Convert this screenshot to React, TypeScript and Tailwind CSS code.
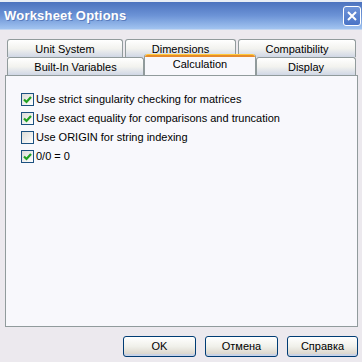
import { useState } from "react";

type Opt = { label: string; checked: boolean };

const initialOptions: Opt[] = [
  { label: "Use strict singularity checking for matrices", checked: true },
  { label: "Use exact equality for comparisons and truncation", checked: true },
  { label: "Use ORIGIN for string indexing", checked: false },
  { label: "0/0 = 0", checked: true },
];

function Tab({
  label,
  width,
  selected,
}: {
  label: string;
  width: string;
  selected?: boolean;
}) {
  if (selected) {
    return (
      <div
        className={`${width} relative z-10 -mt-[3px] h-[21px] -mb-[1px] flex flex-col rounded-t-[3px] border-x border-[#919B9C] bg-[#F8F8FC]`}
      >
        <div className="h-[3px] rounded-t-[3px] bg-[#E68B2C] border-t border-[#FFC83C]" />
        <div className="flex-1 text-center leading-[15px] text-black">
          {label}
        </div>
      </div>
    );
  }
  return (
    <div
      className={`${width} h-[18px] rounded-t-[3px] border border-b-0 border-[#919B9C] bg-gradient-to-b from-[#FFFFFF] via-[#F3F3EF] to-[#D0D7E5] text-center leading-[19px] text-black`}
    >
      {label}
    </div>
  );
}

function Check({ checked, onClick }: { checked: boolean; onClick: () => void }) {
  return (
    <div
      onClick={onClick}
      className="w-[13px] h-[13px] border border-[#1C5180] bg-gradient-to-br from-[#DCDCD7] to-[#FFFFFF] flex items-center justify-center"
    >
      {checked && (
        <svg width="9" height="8" viewBox="0 0 9 8">
          <path
            d="M1 3.5 L3.5 6 L8 1"
            stroke="#21A121"
            strokeWidth="2.2"
            fill="none"
          />
        </svg>
      )}
    </div>
  );
}

function Btn({ label, width }: { label: string; width: string }) {
  return (
    <button
      className={`${width} h-[21px] rounded-[3px] border border-[#003C74] bg-gradient-to-b from-[#FFFFFF] via-[#F0F0EA] to-[#D6D0C5] text-[11px] text-black shadow-[inset_0_-2px_0_#C9D3E6]`}
    >
      {label}
    </button>
  );
}

export default function App() {
  const [options, setOptions] = useState(initialOptions);

  const toggle = (i: number) =>
    setOptions((prev) =>
      prev.map((o, j) => (j === i ? { ...o, checked: !o.checked } : o))
    );

  return (
    <div
      className="w-[362px] h-[362px] overflow-hidden bg-[#ECE9EE] flex flex-col text-[11px]"
      style={{ fontFamily: "Tahoma, 'Liberation Sans', sans-serif" }}
    >
      {/* title bar */}
      <div className="h-[2px] bg-[#E9EDF5]" />
      <div className="h-[28px] flex items-center justify-between pl-[4px] pr-[1px] bg-gradient-to-b from-[#4C72BE] via-[#6C93D6] to-[#A2C4F0] border-b border-[#C4D6F0]">
        <span className="text-white font-bold text-[13px] tracking-[0.2px] [text-shadow:1px_1px_0_#5A7CBC]">
          Worksheet Options
        </span>
        <div className="w-[18px] h-[20px] rounded-[3px] border border-white bg-gradient-to-b from-[#6E93D8] to-[#4A74C6] flex items-center justify-center">
          <svg width="10" height="10" viewBox="0 0 10 10">
            <path d="M1 1 L9 9 M9 1 L1 9" stroke="white" strokeWidth="2" />
          </svg>
        </div>
      </div>

      {/* tabs */}
      <div className="mt-[9px] pl-[7px] flex flex-col">
        <div className="flex gap-[2px]">
          <Tab label="Unit System" width="w-[116px]" />
          <Tab label="Dimensions" width="w-[111px]" />
          <Tab label="Compatibility" width="w-[118px]" />
        </div>
        <div className="flex">
          <Tab label="Built-In Variables" width="w-[137px]" />
          <Tab label="Calculation" width="w-[112px]" selected />
          <Tab label="Display" width="w-[100px]" />
        </div>
      </div>

      {/* panel */}
      <div className="ml-[5px] w-[353px] h-[252px] border border-[#919B9C] bg-[#F8F8FC] pt-[17px] pl-[15px] flex flex-col gap-[6px]">
        {options.map((o, i) => (
          <div key={o.label} className="flex items-center gap-[2px] h-[13px]">
            <Check checked={o.checked} onClick={() => toggle(i)} />
            <span className="text-black leading-[13px]">{o.label}</span>
          </div>
        ))}
      </div>

      {/* buttons */}
      <div className="mt-[9px] flex justify-end gap-[9px] pr-[4px]">
        <Btn label="OK" width="w-[73px]" />
        <Btn label="Отмена" width="w-[73px]" />
        <Btn label="Справка" width="w-[71px]" />
      </div>
    </div>
  );
}
